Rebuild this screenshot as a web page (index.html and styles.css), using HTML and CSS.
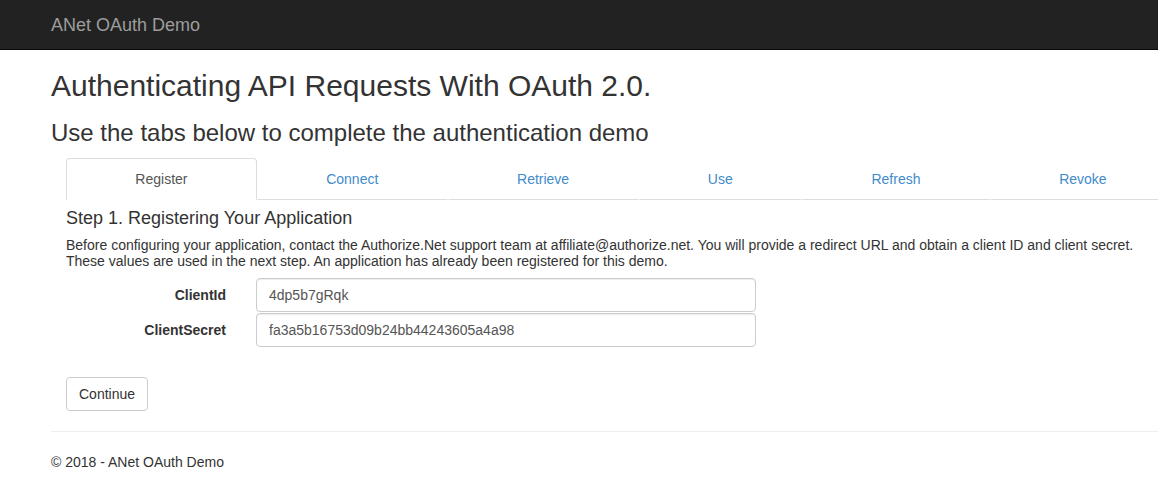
FILE: index.html
```html
<!DOCTYPE html>
<html lang="en">
<head>
<meta charset="utf-8">
<title>ANet OAuth Demo</title>
<link rel="stylesheet" href="styles.css">
</head>
<body>
<nav class="navbar">
  <div class="container">
    <a class="brand" href="#">ANet OAuth Demo</a>
  </div>
</nav>
<div class="container body-content">
  <h1 class="title">Authenticating API Requests With OAuth 2.0.</h1>
  <h3 class="subtitle">Use the tabs below to complete the authentication demo</h3>
  <div class="inner">
    <ul class="tabs">
      <li class="tab active"><a href="#">Register</a></li>
      <li class="tab"><a href="#">Connect</a></li>
      <li class="tab"><a href="#">Retrieve</a></li>
      <li class="tab"><a href="#">Use</a></li>
      <li class="tab"><a href="#">Refresh</a></li>
      <li class="tab"><a href="#">Revoke</a></li>
    </ul>
    <div class="pane">
      <h4 class="step">Step 1. Registering Your Application</h4>
      <p class="desc">Before configuring your application, contact the Authorize.Net support team at affiliate@authorize.net. You will provide a redirect URL and obtain a client ID and client secret. These values are used in the next step. An application has already been registered for this demo.</p>
      <form class="form">
        <div class="form-row">
          <label class="label">ClientId</label>
          <input class="input" type="text" value="4dp5b7gRqk">
        </div>
        <div class="form-row">
          <label class="label">ClientSecret</label>
          <input class="input" type="text" value="fa3a5b16753d09b24bb44243605a4a98">
        </div>
        <button class="btn" type="button">Continue</button>
      </form>
    </div>
  </div>
  <hr class="rule">
  <footer class="footer">© 2018 - ANet OAuth Demo</footer>
</div>
</body>
</html>
```
FILE: styles.css
```css
html, body {
  margin: 0;
  padding: 0;
  overflow: hidden;
}
body {
  font-family: "Liberation Sans", Arial, Helvetica, sans-serif;
  font-size: 14px;
  line-height: 20px;
  color: #333;
  background: #fff;
}
.container {
  width: 1140px;
  margin-left: 36px;
  padding: 0 15px;
}
.navbar {
  height: 49px;
  background: #222;
  border-bottom: 1px solid #080808;
}
.navbar .container {
  height: 49px;
  display: flex;
  align-items: center;
}
.brand {
  color: #9d9d9d;
  font-size: 18px;
  line-height: 20px;
  text-decoration: none;
  padding-top: 1px;
}
.title {
  font-size: 30px;
  line-height: 1.1;
  font-weight: 500;
  margin: 19px 0 0;
}
.subtitle {
  font-size: 24px;
  line-height: 1.1;
  font-weight: 500;
  margin: 18px 0 0;
}
.inner {
  padding: 0 15px;
  margin-top: 12px;
}
.tabs {
  list-style: none;
  margin: 0;
  padding: 0;
  display: flex;
}
.tab {
  flex: 1 1 auto;
}
.tab a {
  display: block;
  text-align: center;
  padding: 10px 15px;
  line-height: 20px;
  color: #428bca;
  text-decoration: none;
  border: 1px solid transparent;
  border-bottom-color: #ddd;
  border-radius: 4px 4px 0 0;
}
.tab.active a {
  color: #555;
  border-color: #ddd;
  border-bottom-color: #fff;
}
.step {
  font-size: 18px;
  line-height: 1.1;
  font-weight: 500;
  margin: 9px 0 0;
}
.desc {
  margin: 8px 0 0;
  line-height: 16px;
  max-width: 1090px;
}
.form {
  margin-top: 9px;
}
.form-row {
  display: grid;
  grid-template-columns: 160px 500px;
  column-gap: 30px;
  align-items: center;
  margin-bottom: 1px;
}
.label {
  text-align: right;
  font-weight: 700;
}
.input {
  box-sizing: border-box;
  height: 34px;
  width: 500px;
  padding: 6px 12px;
  font-family: inherit;
  font-size: 14px;
  color: #555;
  background: #fff;
  border: 1px solid #ccc;
  border-radius: 4px;
  box-shadow: inset 0 1px 1px rgba(0,0,0,.075);
  margin: 0;
}
.btn {
  display: block;
  margin-top: 30px;
  height: 34px;
  padding: 6px 12px;
  font-family: inherit;
  font-size: 14px;
  line-height: 20px;
  color: #333;
  background: #fff;
  border: 1px solid #ccc;
  border-radius: 4px;
}
.rule {
  margin: 20px 0 0;
  border: 0;
  border-top: 1px solid #eee;
  width: 1140px;
}
.footer {
  margin-top: 20px;
}
```
